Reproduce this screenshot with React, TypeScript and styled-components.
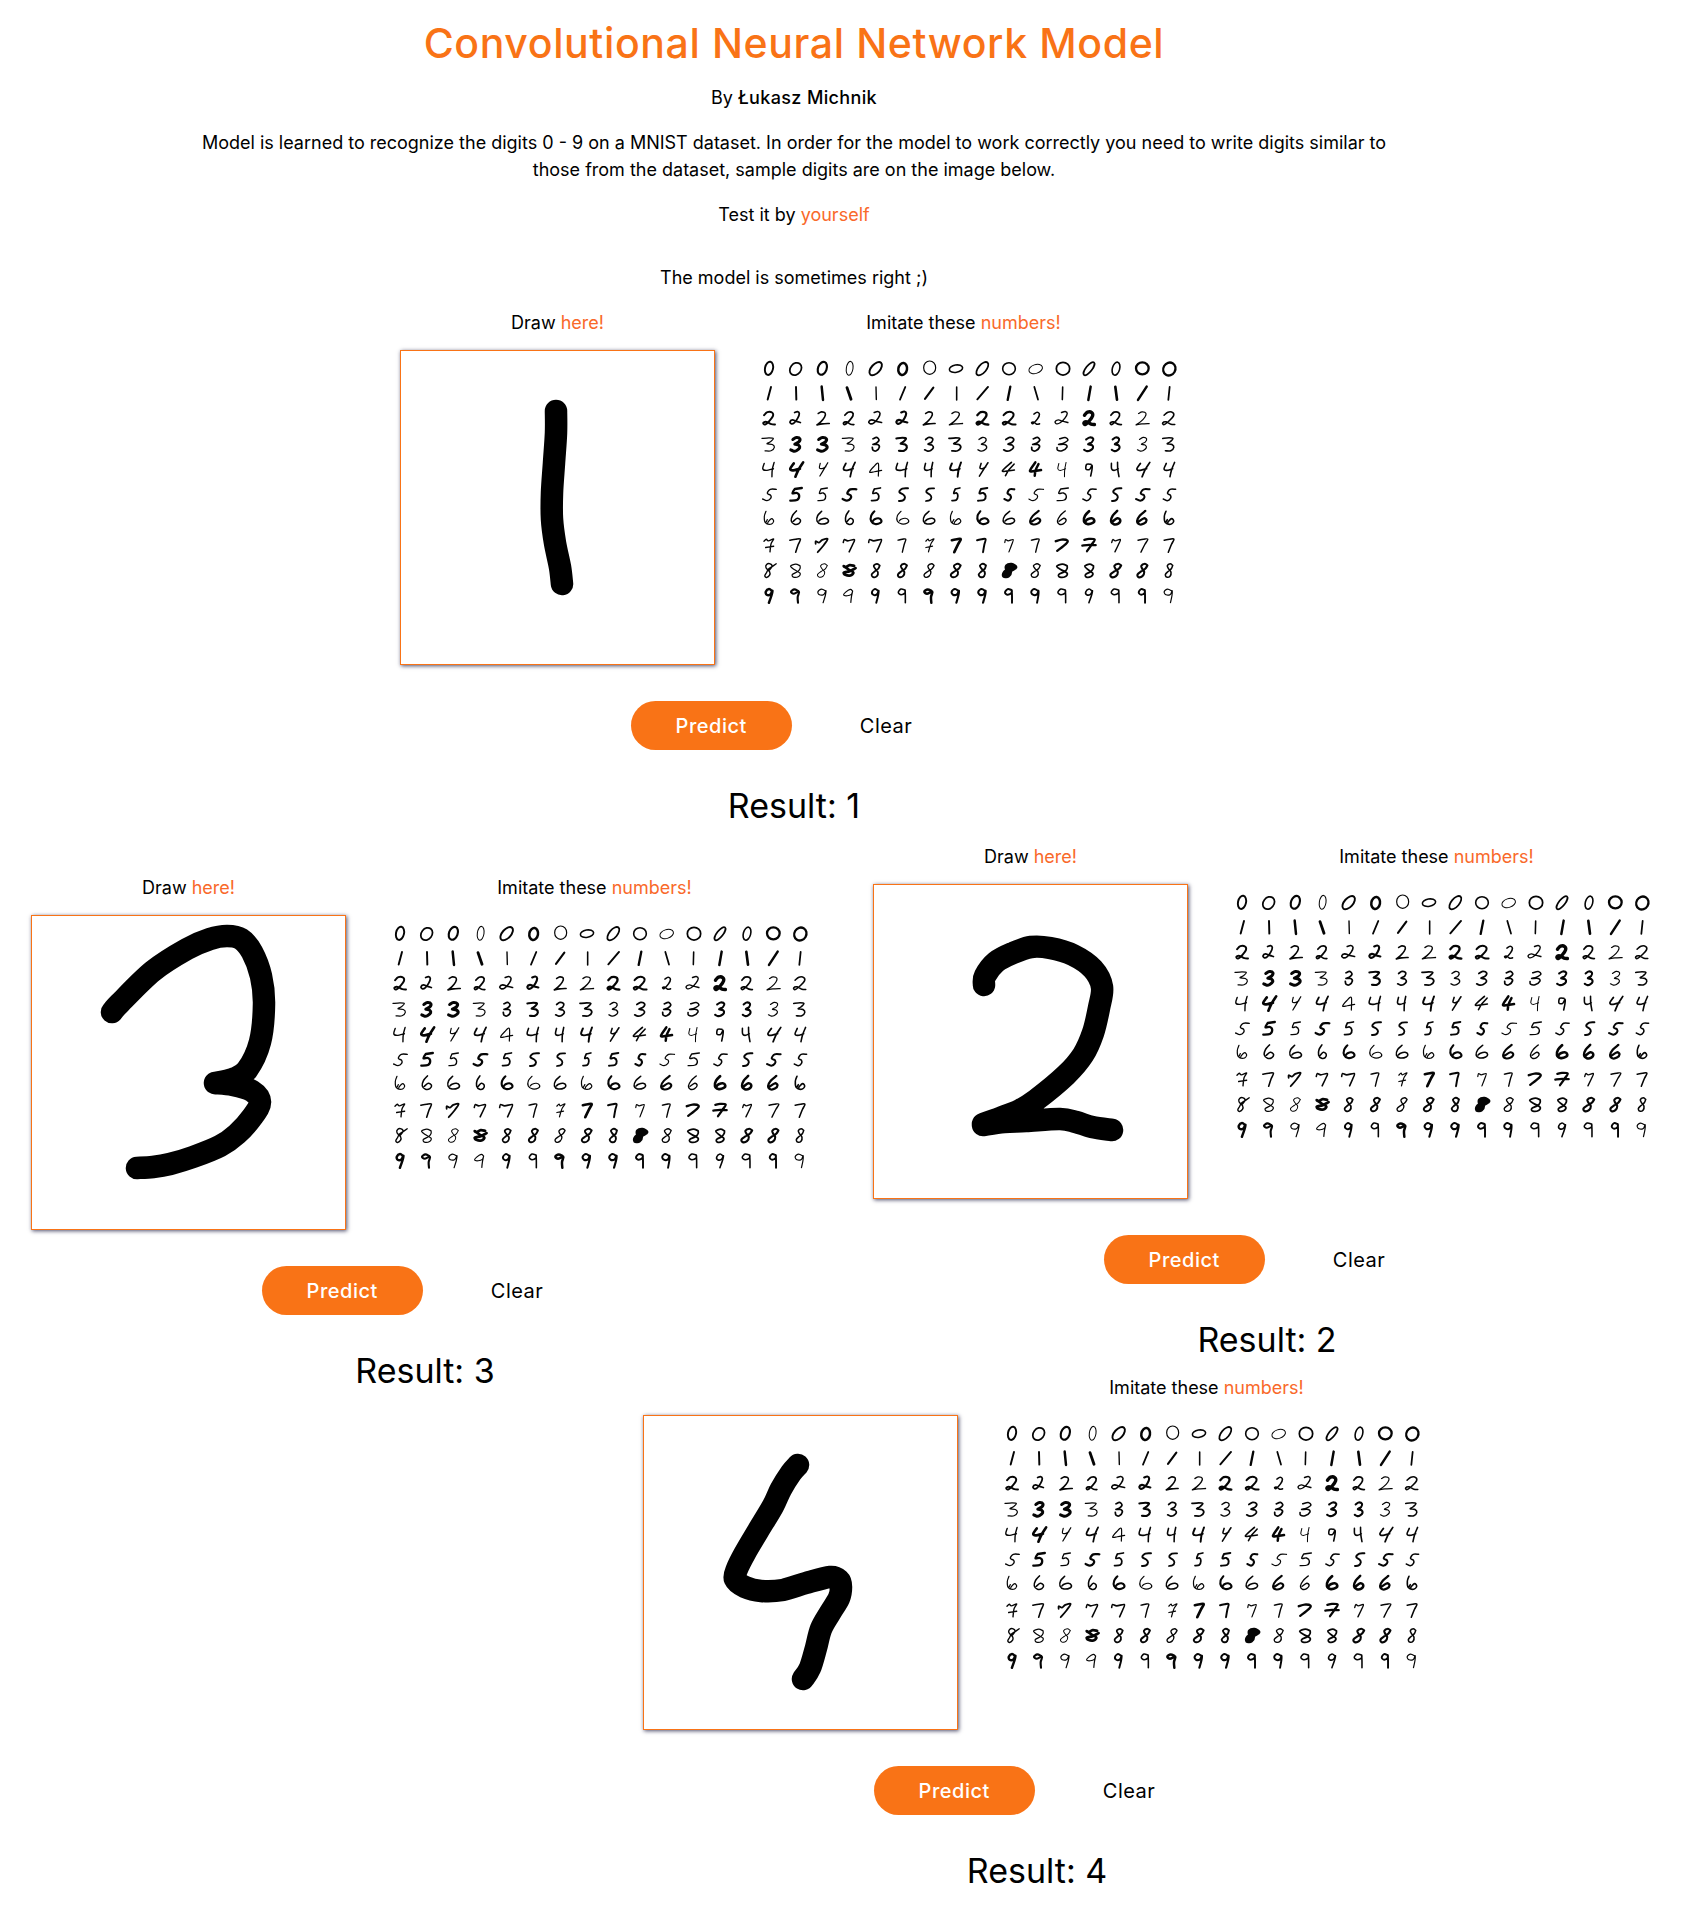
import React from "react";
import styled, { createGlobalStyle } from "styled-components";

const GlobalStyle = createGlobalStyle`
  *, *::before, *::after { box-sizing: border-box; }
  body {
    margin: 0;
    background: #fff;
    color: #000;
    font-family: Inter, "Liberation Sans", sans-serif;
    font-size: 18px;
    font-weight: 400;
    line-height: 27px;
  }
  h1, h2, p, figure { margin: 0; }
`;

const Page = styled.main`
  padding-bottom: 16px;
`;

const Intro = styled.section`
  display: flex;
  flex-direction: column;
  align-items: center;
  gap: 18px;
  padding: 21px 93px 0 0;
  text-align: center;
`;

const Title = styled.h1`
  color: #f97316;
  font-size: 41px;
  font-weight: 500;
  line-height: 45px;
  letter-spacing: 0.015em;
`;

const Author = styled.strong`
  font-weight: 500;
  letter-spacing: 0.02em;
`;

const Lead = styled.p`
  max-width: 1200px;
`;

const Remark = styled.p`
  padding-top: 18px;
`;

const Accent = styled.span`
  color: #f9692a;
`;

const PairRow = styled.section`
  display: flex;
  flex-wrap: wrap;
  justify-content: space-between;
  align-items: flex-start;
  padding: 17px 20px 0 31px;
`;

const Lowered = styled.div`
  padding-top: 31px;
`;

const LastRow = styled.section`
  display: flex;
  justify-content: center;
  margin-top: -17px;
  padding-left: 393px;
`;

const Panel = styled.article`
  display: flex;
  flex-direction: column;
  align-items: center;
  gap: 36px;
`;

const Boards = styled.div`
  display: flex;
  align-items: flex-start;
  gap: 24px;
`;

const Board = styled.figure`
  display: flex;
  flex-direction: column;
  align-items: center;
  gap: 14px;
`;

const Caption = styled.figcaption`
  min-height: 27px;
`;

const Pad = styled.svg`
  display: block;
  width: 315px;
  height: 315px;
  border: 1px solid #f97316;
  background: #fff;
  box-shadow: 1px 1px 4px rgba(20, 20, 60, 0.75);
`;

const Samples = styled.svg`
  display: block;
  width: 449px;
  height: 272px;
`;

const Actions = styled.div`
  display: flex;
  gap: 23px;
`;

const Button = styled.button<{ $primary?: boolean }>`
  height: 49px;
  padding: 0 45px;
  border: 0;
  border-radius: 25px;
  background: ${(p) => (p.$primary ? "#f97316" : "transparent")};
  color: ${(p) => (p.$primary ? "#fff" : "#000")};
  font-family: inherit;
  font-size: 20px;
  font-weight: ${(p) => (p.$primary ? 500 : 400)};
  letter-spacing: 0.025em;
  cursor: pointer;
`;

const Result = styled.h2`
  font-size: 34px;
  font-weight: 400;
  line-height: 40px;
`;

type Point = [number, number];

/* Runs a smooth pen line through the points of one stroke. */
function smooth(points: Point[]): string {
  let d = `M${points[0][0]} ${points[0][1]}`;
  for (let i = 0; i < points.length - 1; i++) {
    const a = points[Math.max(i - 1, 0)];
    const b = points[i];
    const c = points[i + 1];
    const e = points[Math.min(i + 2, points.length - 1)];
    d += `C${b[0] + (c[0] - a[0]) / 6} ${b[1] + (c[1] - a[1]) / 6} ${c[0] - (e[0] - b[0]) / 6} ${c[1] - (e[1] - b[1]) / 6} ${c[0]} ${c[1]}`;
  }
  return d;
}

/* "x y x y / x y x y": a slash lifts the pen. */
function parse(text: string): Point[][] {
  return text.split("/").map((part) => {
    const n = part.trim().split(/\s+/).map(Number);
    const out: Point[] = [];
    for (let i = 0; i < n.length; i += 2) out.push([n[i], n[i + 1]]);
    return out;
  });
}

const pen = (text: string) => parse(text).map(smooth).join("");

const drawings: Record<number, string> = {
  1: "155 60 155 82 153 112 151 142 151 168 154 192 159 216 161 233",
  2: "110 100 111 91 122 77 139 68 157 62 176 63 199 70 219 84 228 102 225 123 219 148 209 170 192 190 162 215 146 225 126 233 109 239 / 109 240 130 237 152 236 186 234 202 237 218 242 238 245",
  3: "80 96 88 87 121 55 155 33 178 23 195 20 209 23 220 36 229 60 232 88 228 126 215 154 201 163 183 167 / 183 167 201 169 220 175 228 186 221 200 205 218 188 230 161 241 138 248 121 251 105 252",
  4: "154 49 147 57 137 73 129 90 114 115 101 137 93 153 91 163 101 171 117 175 139 174 162 167 186 161 195 164 197 171 195 182 186 197 177 213 172 232 166 252 159 263",
};

/* Zeros: weight, x, y, rx, ry, tilt. */
const zeros = [
  [5, 0, 0, 12, 20, 12], [4.5, 0, 2, 16, 20, 38], [5.5, 0, 0, 13, 20, 20], [2.5, 2, 0, 10, 21, 8],
  [5, 0, 1, 13, 24, 42], [6.5, 1, 2, 13, 18, 10], [3, 2, -2, 18, 20, 0], [4, 1, 1, 20, 11, -10],
  [4.5, 0, 1, 12, 24, 40], [4, 0, 1, 19, 18, 0], [2.5, 0, 2, 21, 13, -18], [4.5, 2, 1, 20, 19, 0],
  [4.5, 0, 1, 9, 24, 38], [4, 1, 1, 11, 20, 15], [6, 0, 0, 19, 18, 0], [6, 1, 2, 18, 20, 30],
];

/* Ones: weight, then both ends of the line. */
const ones = [
  [5, 6, -20, -4, 18], [5, 1, -20, 2, 18], [6.5, -2, -21, 2, 19], [7.5, -6, -18, 6, 17],
  [3.5, 1, -20, 2, 18], [4.5, 9, -20, -7, 18], [5.5, 13, -18, -12, 16], [4, 3, -20, 3, 19],
  [5, 17, -20, -15, 17], [6, 4, -21, -4, 19], [4.5, -4, -20, 7, 18], [4, 1, -20, 0, 18],
  [6.5, 5, -21, -2, 19], [7, -1, -20, 4, 18], [6.5, 13, -21, -13, 19], [4.5, 2, -20, -2, 19],
];

const shapes: Record<string, string> = {
  "2a": "-15 -11 -5 -20 9 -19 12 -9 2 5 -12 17 -17 12 -7 9 7 16 18 17",
  "2b": "-13 -16 -3 -21 9 -17 7 -5 -5 9 -17 18 / -17 18 0 15 22 14",
  "2c": "-6 -19 4 -22 11 -16 7 -2 -3 11 -13 15 -19 9 -11 3 2 7 18 11",
  "2d": "-6 -14 2 -20 9 -14 5 0 -6 14 -10 11 -3 10 4 16 12 15",
  "3a": "-10 -15 0 -21 11 -17 8 -7 -3 -1 9 2 13 10 5 18 -4 20 -13 16",
  "3b": "-21 -18 0 -20 13 -18 4 -8 -6 -2 10 0 16 9 6 19 -12 19",
  "3c": "-8 -17 3 -21 10 -13 2 -4 -8 0 6 0 11 8 2 19 -8 17 -10 9",
  "4a": "-13 -18 -17 -2 -8 3 12 -2 / 14 -21 9 0 8 22",
  "4b": "8 20 8 -18 -6 -8 -18 8 -4 7 18 3",
  "4c": "-9 -18 -10 -4 2 -3 11 -8 / 16 -20 5 0 -6 20",
  "4d": "6 -15 -7 -15 -9 -1 2 0 9 -12 9 0 5 20",
  "4e": "-1 -21 -18 4 -4 5 17 2 / 9 -16 0 2 -3 19",
  "5a": "15 -20 -4 -17 / -4 -17 -9 -4 3 -5 10 4 5 16 -13 18",
  "5b": "22 -16 4 -16 -5 -4 5 2 5 11 -6 18 -19 13",
  "5c": "17 -19 0 -18 -9 -8 3 0 8 8 2 17 -10 19",
  "6a": "2 -22 -8 -8 -11 8 -3 18 8 16 12 6 4 0 -6 9",
  "6b": "-2 -21 -14 -8 -16 8 -4 17 14 14 18 6 9 0 -4 3 -10 8",
  "6c": "-9 -21 -14 -6 -11 13 5 18 14 9 8 1 -2 10 -4 16 / -9 12 -5 4",
  "7a": "-16 -15 0 -18 13 -18 7 -2 0 21",
  "7b": "-15 -12 -8 -18 -2 -13 14 -19 6 -4 3 20 / -10 7 14 3",
  "7c": "-20 -4 -20 -12 -10 -8 0 -16 16 -19 4 0 -14 21",
  "7d": "-15 -8 -13 -17 -4 -13 12 -17 9 -2 2 20",
  "7e": "-14 -16 0 -19 17 -17 8 -2 -6 18 / -20 1 0 -1 20 0",
  "7f": "-18 -12 -2 -17 14 -14 10 -4 -14 17",
  "8a": "12 -15 2 -20 -8 -14 -2 -5 8 5 6 17 -6 20 -12 12 -3 3 8 -5 12 -15",
  "8b": "24 -20 8 -10 -2 -4 -8 6 -14 16 -8 21 2 14 2 4 -10 -8 -8 -18 4 -20 10 -12 0 0",
  "8c": "12 -14 0 -19 -14 -13 -4 -3 12 8 8 18 -6 20 -9 12 6 3 12 -6 12 -14",
  "8d": "14 -14 2 -16 -10 -10 -14 -13 0 -2 12 6 4 15 -10 13 -14 6 2 2 18 -7",
  "8e": "16 -10 6 -15 -6 -12 -4 -2 2 4 -2 14 -12 15 -10 6 0 0 10 -6 16 -10",
  "9a": "9 -14 -2 -20 -12 -12 -8 -3 4 -4 10 -15 8 0 2 21",
  "9b": "8 -17 -4 -20 -12 -10 -4 -3 8 -9 8 -17 9 0 9 21",
  "9c": "8 -14 -4 -19 -14 -12 -6 -6 10 -12 6 4 7 21",
  "9d": "12 -14 4 -19 -12 -10 -18 -2 -6 0 8 -4 12 -14 8 4 6 20",
};

/* Rows two to nine: shape, weight, width factor, slant. */
const rows = [
  "2a 5 1 0|2c 4.5 .85 .1|2b 4 .95 0|2a 4.5 .9 .1|2c 4 1.05 .1|2c 5.5 .9 .1|2b 4 .9 .1|2b 3.5 1 .1|2a 6 1 0|2a 5 1.1 0|2d 4 1.1 .1|2c 3.5 1.05 .2|2a 9 .9 0|2a 4.5 .95 0|2b 3 1 .1|2a 4 1.05 .1",
  "3b 3 1 0|3a 8 1 .1|3a 8 1.1 0|3b 3 .95 0|3c 4.5 1 0|3b 5.5 .85 0|3a 4.5 1 0|3b 4.5 .95 0|3a 3.5 1 0|3a 4.5 1.1 .1|3c 4.5 1.1 .1|3c 4 1.4 .2|3a 5.5 1 .1|3a 5.5 .9 0|3a 3 1 .1|3b 4 .9 0",
  "4a 3.5 1.1 0|4a 7 1 .4|4c 3 .9 .1|4a 4.5 1 .2|4b 3 1 0|4a 4 1.1 0|4a 4 .8 0|4a 5 1 .1|4c 4 .8 .2|4e 4 1 .4|4e 6.5 .95 0|4a 2.5 .8 0|4d 4 1 0|4a 4 .7 -.2|4a 4.5 1 .4|4a 4 .9 .2",
  "5b 3.5 1 0|5a 6 1.1 .1|5a 3.5 1 0|5b 6 1 0|5a 4.5 .95 0|5c 5 1 0|5c 4.5 .9 0|5a 4.5 .7 .1|5a 5 1 0|5b 5.5 .8 -.1|5b 3 1 .1|5a 3.5 1.2 0|5b 4 .9 .1|5c 5 .9 .1|5b 5 1 0|5b 4 .9 0",
  "6c 3 1 0|6a 4 1.2 0|6b 4 1 0|6a 4 1 -.1|6b 5.5 .9 -.1|6b 3 1 -.1|6b 4 1 .1|6c 3 1.1 0|6b 5.5 .9 -.2|6b 4 1 .2|6a 5.5 1.3 .3|6a 3.5 1.1 .3|6b 7 .9 .1|6a 6.5 1.2 .1|6a 6 1.2 .3|6c 4 1 0",
  "7b 3.5 1 0|7a 4 1.1 0|7c 4.5 1 0|7d 4 1.2 .1|7d 4 1.4 0|7a 3.5 .8 0|7b 3 .8 .2|7a 7 .9 .2|7a 5 .9 -.1|7d 3 .9 .1|7a 3.5 .8 0|7f 6 1.1 0|7e 6 1 0|7d 3.5 .9 .2|7a 3.5 1 .2|7a 4 1 .1",
  "8b 3.5 .9 0|8c 3 1.1 0|8a 2.5 1 .2|8d 7 1.1 0|8a 4.5 .9 .1|8a 5 .9 .2|8a 3.5 .9 .3|8a 5 1 .2|8a 5 .9 0|8e 14 1 .1|8a 3.5 1 .1|8c 4.5 1.2 0|8c 4.5 1 .1|8a 5.5 1 .3|8a 5.5 .9 .3|8a 4 .8 .1",
  "9a 6.5 .9 .1|9c 5.5 1 0|9a 3 1.1 0|9d 3 .9 0|9a 5 .9 0|9b 4 1 0|9c 6.5 1 0|9a 5.5 1 0|9a 5.5 1 0|9b 5 1 0|9a 5 1 -.1|9b 4 1.1 0|9a 4 .9 .1|9b 4 1.1 0|9b 5 .9 0|9a 3 1.1 -.1",
].map((row) => row.split("|"));

const rowShift = [0, 1, 0, 0, -5, 0, 0, 0];

/* Ink spreads a little around the pen line. */
const ink = (weight: number) => weight * 1.1 + 0.3;

function shapePath(cell: string) {
  const [key, weight, factor, slant] = cell.split(" ");
  const d = parse(shapes[key])
    .map((stroke) => smooth(stroke.map(([x, y]): Point => [x * Number(factor) - y * Number(slant), y])))
    .join("");
  return { d, weight: ink(Number(weight)) };
}

const cellX = (c: number) => 90 + c * 80;
const cellY = (r: number) => 55 + r * 75.8;

function SampleDigits() {
  return (
    <Samples viewBox="0 0 1347 816" role="img" aria-label="Handwritten sample digits">
      <g fill="none" stroke="#050505" strokeLinecap="round" strokeLinejoin="round">
        {zeros.map(([w, x, y, rx, ry, tilt], c) => (
          <ellipse key={c} rx={rx} ry={ry} strokeWidth={ink(w)} transform={`translate(${cellX(c) + x} ${cellY(0) + y}) rotate(${tilt})`} />
        ))}
        {ones.map(([w, x1, y1, x2, y2], c) => (
          <line key={c} x1={x1} y1={y1} x2={x2} y2={y2} strokeWidth={ink(w)} transform={`translate(${cellX(c)} ${cellY(1)})`} />
        ))}
        {rows.map((row, r) =>
          row.map((cell, c) => {
            const { d, weight } = shapePath(cell);
            return <path key={`${r}-${c}`} d={d} strokeWidth={weight} transform={`translate(${cellX(c)} ${cellY(r + 2) + rowShift[r]})`} />;
          })
        )}
      </g>
    </Samples>
  );
}

function Recognizer({ digit, drawCaption = true }: { digit: number; drawCaption?: boolean }) {
  return (
    <Panel>
      <Boards>
        <Board>
          <Caption>{drawCaption && <>Draw <Accent>here!</Accent></>}</Caption>
          <Pad viewBox="0 0 313 313" role="img" aria-label="Drawing area">
            <path d={pen(drawings[digit])} fill="none" stroke="#000" strokeWidth="22.5" strokeLinecap="round" strokeLinejoin="round" />
          </Pad>
        </Board>
        <Board>
          <Caption>Imitate these <Accent>numbers!</Accent></Caption>
          <SampleDigits />
        </Board>
      </Boards>
      <Actions>
        <Button type="button" $primary>Predict</Button>
        <Button type="button">Clear</Button>
      </Actions>
      <Result>Result: {digit}</Result>
    </Panel>
  );
}

export default function App() {
  return (
    <Page>
      <GlobalStyle />
      <Intro>
        <Title>Convolutional Neural Network Model</Title>
        <p>By <Author>Łukasz Michnik</Author></p>
        <Lead>
          Model is learned to recognize the digits 0 - 9 on a MNIST dataset. In order for the model to work
          correctly you need to write digits similar to those from the dataset, sample digits are on the image below.
        </Lead>
        <p>Test it by <Accent>yourself</Accent></p>
        <Remark>The model is sometimes right ;)</Remark>
        <Recognizer digit={1} />
      </Intro>
      <PairRow>
        <Lowered>
          <Recognizer digit={3} />
        </Lowered>
        <Recognizer digit={2} />
      </PairRow>
      <LastRow>
        <Recognizer digit={4} drawCaption={false} />
      </LastRow>
    </Page>
  );
}
